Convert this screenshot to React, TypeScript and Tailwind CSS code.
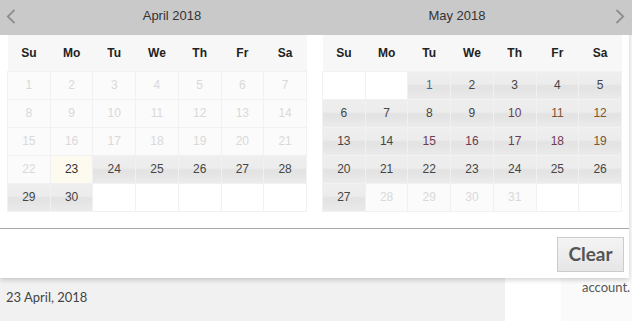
type Kind = 'off' | 'empty' | 'on' | 'today';
type Cell = { d?: number; k: Kind };

const off = (d: number): Cell => ({ d, k: 'off' });
const on = (d: number): Cell => ({ d, k: 'on' });
const empty: Cell = { k: 'empty' };

const april: Cell[][] = [
  [1, 2, 3, 4, 5, 6, 7].map(off),
  [8, 9, 10, 11, 12, 13, 14].map(off),
  [15, 16, 17, 18, 19, 20, 21].map(off),
  [off(22), { d: 23, k: 'today' }, ...[24, 25, 26, 27, 28].map(on)],
  [on(29), on(30), empty, empty, empty, empty, empty],
];

const may: Cell[][] = [
  [empty, empty, ...[1, 2, 3, 4, 5].map(on)],
  [6, 7, 8, 9, 10, 11, 12].map(on),
  [13, 14, 15, 16, 17, 18, 19].map(on),
  [20, 21, 22, 23, 24, 25, 26].map(on),
  [on(27), ...[28, 29, 30, 31].map(off), empty, empty],
];

// a few days in May carry their own colour
const mayColor: Record<number, string> = {
  1: 'text-[#46698c]',
  10: 'text-[#6f3a52]',
  15: 'text-[#6f3a52]',
  16: 'text-[#6f3a52]',
  17: 'text-[#6f3a52]',
  18: 'text-[#6f3a52]',
  11: 'text-[#80542f]',
  12: 'text-[#80542f]',
  19: 'text-[#80542f]',
};

const days = ['Su', 'Mo', 'Tu', 'We', 'Th', 'Fr', 'Sa'];

function Chevron({ dir }: { dir: 'left' | 'right' }) {
  return (
    <svg width="10" height="15" viewBox="0 0 10 15" className="shrink-0">
      <polyline
        points={dir === 'left' ? '8.5,1 1.8,7.5 8.5,14' : '1.5,1 8.2,7.5 1.5,14'}
        fill="none"
        stroke="#8e8e8e"
        strokeWidth="1.8"
      />
    </svg>
  );
}

function Month({ rows, colors }: { rows: Cell[][]; colors?: Record<number, string> }) {
  return (
    <table className="w-[300px] table-fixed border-collapse font-['Liberation_Sans',Arial,sans-serif] text-[12px]">
      <thead>
        <tr className="bg-[#f7f7f7]">
          {days.map((d) => (
            <th key={d} className="h-[36px] p-0 text-center font-bold text-[#222]">
              {d}
            </th>
          ))}
        </tr>
      </thead>
      <tbody>
        {rows.map((row, i) => (
          <tr key={i}>
            {row.map((c, j) => {
              let cls = 'bg-white';
              if (c.k === 'off') cls = 'bg-[#fbfbfb] text-[#d9d9d9]';
              if (c.k === 'today') cls = 'bg-[#fdfbf0] text-[#333]';
              if (c.k === 'on')
                cls =
                  'bg-[linear-gradient(to_bottom,#eeeeee_0%,#ececec_46%,#e2e2e2_54%,#eaeaea_100%)] ' +
                  ((colors && c.d && colors[c.d]) || 'text-[#454545]');
              return (
                <td key={j} className={`h-[28px] border border-[#f1f1f1] p-0 text-center ${cls}`}>
                  {c.d}
                </td>
              );
            })}
          </tr>
        ))}
      </tbody>
    </table>
  );
}

export default function App() {
  return (
    <div className="relative h-[321px] w-[632px] overflow-hidden bg-white">
      {/* page behind the picker */}
      <div className="flex h-full">
        <div className="flex w-[505px] flex-col justify-end">
          <div className="flex h-[44px] items-center bg-[#f1f1f1] px-[6px] pb-[2px] font-['Lato',sans-serif] text-[13px] text-[#444]">
            23 April, 2018
          </div>
        </div>
        <div className="w-[56px]" />
        <div className="flex min-w-0 flex-1 flex-col justify-end bg-[#fafafa] pb-[21px] pl-[21px] font-['Lato',sans-serif] text-[13px] leading-[25px] text-[#555]">
          <p className="whitespace-nowrap">account.</p>
        </div>
      </div>

      {/* datepicker popup */}
      <div className="absolute left-0 top-0 w-[629px] bg-white shadow-[0_2px_5px_rgba(0,0,0,0.18)]">
        <div className="flex h-[35px] w-[632px] items-center bg-[#c9c9c9] pb-[3px] font-['Liberation_Sans',Arial,sans-serif] text-[13px] text-[#333]">
          <div className="ml-[6px]">
            <Chevron dir="left" />
          </div>
          <div className="ml-[21px] w-[270px] text-center">April 2018</div>
          <div className="ml-[15px] w-[270px] text-center">May 2018</div>
          <div className="ml-[23px]">
            <Chevron dir="right" />
          </div>
        </div>
        <div className="flex gap-[15px] px-[7px]">
          <Month rows={april} />
          <Month rows={may} colors={mayColor} />
        </div>
        <div className="mt-[16px] flex h-[50px] items-start justify-end border-t border-[#a9a9a9] pr-[5px] pt-[8px]">
          <button className="h-[35px] w-[67px] border border-[#cccccc] bg-[linear-gradient(to_bottom,#f4f4f4,#e6e6e6)] font-['Lato',sans-serif] text-[19px] font-bold text-[#555]">
            Clear
          </button>
        </div>
      </div>
    </div>
  );
}
